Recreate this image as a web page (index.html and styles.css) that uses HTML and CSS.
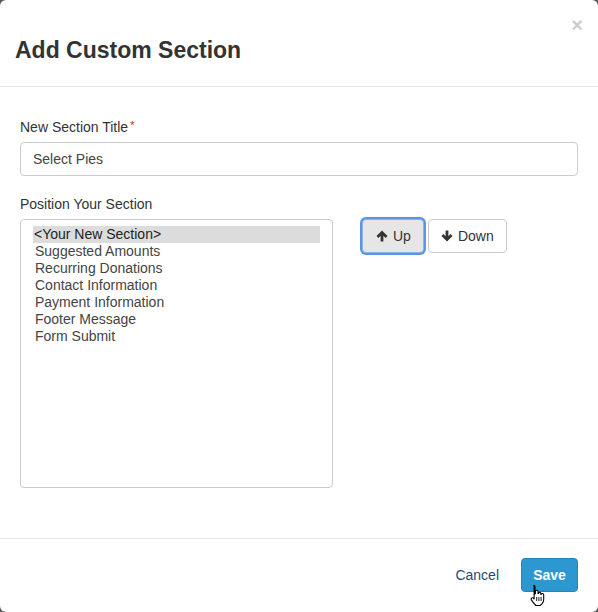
FILE: index.html
```html
<!DOCTYPE html>
<html>
<head>
<meta charset="utf-8">
<link rel="stylesheet" href="styles.css">
</head>
<body>
<div class="modal">
  <div class="modal-header">
    <h4 class="modal-title">Add Custom Section</h4>
    <span class="close">&times;</span>
  </div>
  <div class="modal-body">
    <div class="form-group">
      <label class="label">New Section Title<span class="req">*</span></label>
      <div class="input">Select Pies</div>
    </div>
    <div class="form-group">
      <label class="label">Position Your Section</label>
      <div class="position-row">
        <ul class="listbox" role="listbox">
          <li class="opt selected">&lt;Your New Section&gt;</li>
          <li class="opt">Suggested Amounts</li>
          <li class="opt">Recurring Donations</li>
          <li class="opt">Contact Information</li>
          <li class="opt">Payment Information</li>
          <li class="opt">Footer Message</li>
          <li class="opt">Form Submit</li>
        </ul>
        <div class="move-buttons">
          <button class="btn btn-default focused"><svg class="ico" viewBox="0 0 12 12"><path d="M6 0.5 L11.5 6 L9.6 7.9 L7.4 5.7 L7.4 11.5 L4.6 11.5 L4.6 5.7 L2.4 7.9 L0.5 6 Z" fill="#333"/></svg>Up</button>
          <button class="btn btn-default"><svg class="ico" viewBox="0 0 12 12"><path d="M6 11.5 L11.5 6 L9.6 4.1 L7.4 6.3 L7.4 0.5 L4.6 0.5 L4.6 6.3 L2.4 4.1 L0.5 6 Z" fill="#333"/></svg>Down</button>
        </div>
      </div>
    </div>
  </div>
  <div class="modal-footer">
    <a class="btn-link">Cancel</a>
    <button class="btn btn-primary">Save</button>
    <svg class="cursor" viewBox="0 0 18 22" width="18" height="22"><path d="M5.5 1.2c0.9 0 1.5 0.6 1.5 1.5v7.2l0.4-0.1V7.6c0-0.8 0.6-1.3 1.3-1.3s1.3 0.5 1.3 1.3v2l0.4 0c0-0.7 0.6-1.2 1.3-1.2s1.2 0.5 1.2 1.2v0.9l0.4 0c0.1-0.6 0.6-1 1.2-1 0.7 0 1.2 0.5 1.2 1.2v4.6c0 2.6-1.5 4.9-3.6 6.2H7.9c-1.1-1.1-2.9-3.3-4.4-5.4-0.6-0.8-0.4-1.7 0.3-2.1 0.6-0.4 1.4-0.2 1.9 0.4l0.4 0.5V2.7c0-0.9 -0.5-1.5 -0.6-1.5z" fill="#fff" stroke="#000" stroke-width="1.1" stroke-linejoin="round"/><path d="M8.7 13v4M10.9 13v4M13.1 13v4" stroke="#000" stroke-width="0.9"/></svg>
  </div>
</div>
</body>
</html>
```

FILE: styles.css
```css
html, body {
  margin: 0;
  padding: 0;
}
body {
  background: #5a5a5a;
  font-family: "Liberation Sans", Arial, sans-serif;
  font-size: 14px;
  color: #333;
}
.modal {
  width: 598px;
  height: 612px;
  background: #fff;
  border-radius: 6px;
  display: flex;
  flex-direction: column;
  position: relative;
  overflow: hidden;
}
.modal-header {
  padding: 37px 15px 23px;
  border-bottom: 1px solid #e5e5e5;
}
.modal-title {
  margin: 0;
  font-size: 23px;
  line-height: 26px;
  font-weight: bold;
  color: #333;
}
.close {
  position: absolute;
  top: 14px;
  right: 15px;
  font-size: 20px;
  line-height: 22px;
  font-weight: bold;
  color: #000;
  opacity: 0.2;
}
.modal-body {
  flex: 1;
  padding: 30px 20px 0;
}
.form-group {
  margin-bottom: 18px;
}
.label {
  display: block;
  line-height: 20px;
  margin-bottom: 5px;
  color: #333;
}
.req {
  color: #e02020;
  font-size: 11px;
  vertical-align: top;
  margin-left: 2px;
  line-height: 16px;
}
.input {
  box-sizing: border-box;
  height: 34px;
  border: 1px solid #ccc;
  border-radius: 4px;
  padding: 6px 12px;
  line-height: 20px;
  color: #444;
}
.position-row {
  display: flex;
  align-items: flex-start;
  gap: 29px;
}
.listbox {
  box-sizing: border-box;
  width: 313px;
  height: 269px;
  margin: 0;
  list-style: none;
  border: 1px solid #ccc;
  border-radius: 4px;
  padding: 6px 12px;
}
.opt {
  height: 17px;
  line-height: 17px;
  padding-left: 2px;
  color: #444;
}
.opt.selected {
  background: #dcdcdc;
  color: #222;
  padding-left: 1px;
}
.move-buttons {
  display: flex;
  gap: 4px;
}
.btn {
  box-sizing: border-box;
  height: 34px;
  font-family: inherit;
  font-size: 14px;
  line-height: 20px;
  padding: 6px 12px;
  border-radius: 4px;
  display: inline-flex;
  align-items: center;
  cursor: pointer;
}
.btn-default {
  background: #fff;
  border: 1px solid #ccc;
  color: #333;
}
.btn-default.focused {
  background: #e6e6e6;
  border-color: #8cb4e8;
  box-shadow: 0 0 0 2px #5b93e6;
}
.ico {
  width: 12px;
  height: 12px;
  margin-right: 5px;
}
.btn-default.focused .ico {
  margin-left: 1px;
}
.modal-footer {
  border-top: 1px solid #e5e5e5;
  padding: 19px 20px 20px;
  display: flex;
  justify-content: flex-end;
  align-items: center;
  position: relative;
}
.btn-link {
  color: #23497a;
  line-height: 20px;
  margin-right: 22px;
}
.btn-primary {
  background: #2c98cf;
  border: 1px solid #2683b4;
  color: #fff;
  font-weight: bold;
  width: 57px;
  justify-content: center;
}
.cursor {
  position: absolute;
  left: 528px;
  top: 45px;
}
```
